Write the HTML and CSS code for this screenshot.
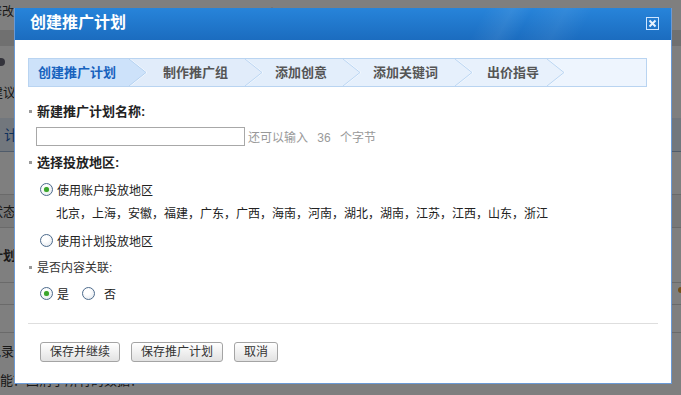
FILE: index.html
```html
<!DOCTYPE html>
<html lang="zh-CN">
<head>
    <meta charset="UTF-8">
    <meta name="viewport" content="width=device-width, initial-scale=1.0">
    <title>创建推广计划</title>
    <link rel="stylesheet" href="styles.css">
</head>
<body>

    <!-- page behind the dialog -->
    <div class="page">
        <div class="row row-top"><span class="cut">修改</span><span class="nav">账户设置 ⓘ　　推广管理　　　数据报告　　　优化中心　　　　工具</span></div>
        <div class="row row-band"></div>
        <div class="row row-info"><span class="dot"></span><span class="cut">建议。</span></div>
        <div class="row row-tab"><span class="tab">计划</span></div>
        <div class="row row-empty"></div>
        <div class="row row-head"><span class="cut">状态</span></div>
        <div class="row row-plan"><b class="cut">计划</b></div>
        <div class="row row-a"><span class="orange"></span></div>
        <div class="row row-b"></div>
        <div class="row row-log"><span class="cut2">记录</span></div>
        <div class="row row-last"><span>能？回消了所有的数据？</span></div>
    </div>

    <div class="overlay"></div>

    <div class="dialog">
        <div class="dialog-head">
            <span class="dialog-title">创建推广计划</span>
            <span class="close">
                <svg width="13" height="13" viewBox="0 0 13 13">
                    <rect x="0.5" y="0.5" width="12" height="12" fill="none" stroke="#cfe6ff"/>
                    <path d="M3.5 3.5 L9.5 9.5 M9.5 3.5 L3.5 9.5" stroke="#e8f3ff" stroke-width="2"/>
                </svg>
            </span>
        </div>

        <div class="dialog-body">
            <div class="steps">
                <div class="step step-on first">创建推广计划</div>
                <svg class="arrow" width="18" height="27" viewBox="0 0 18 27">
                    <rect width="18" height="27" fill="#e1ecfa"/>
                    <polygon points="0,0 17,13.5 0,27" fill="#cde2fa"/>
                    <polyline points="1,0 18,13.5 1,27" fill="none" stroke="#f4f9ff"/>
                    <polyline points="0,0 17,13.5 0,27" fill="none" stroke="#b6d2f0"/>
                </svg>
                <div class="step">制作推广组</div>
                <svg class="arrow" width="18" height="27" viewBox="0 0 18 27">
                    <rect width="18" height="27" fill="#e3eefb"/>
                    <polygon points="0,0 17,13.5 0,27" fill="#e1ecfa"/>
                    <polyline points="1,0 18,13.5 1,27" fill="none" stroke="#f4f9ff"/>
                    <polyline points="0,0 17,13.5 0,27" fill="none" stroke="#bcd6f2"/>
                </svg>
                <div class="step step-3">添加创意</div>
                <svg class="arrow" width="18" height="27" viewBox="0 0 18 27">
                    <rect width="18" height="27" fill="#e6f0fc"/>
                    <polygon points="0,0 17,13.5 0,27" fill="#e3eefb"/>
                    <polyline points="1,0 18,13.5 1,27" fill="none" stroke="#f4f9ff"/>
                    <polyline points="0,0 17,13.5 0,27" fill="none" stroke="#bcd6f2"/>
                </svg>
                <div class="step step-4">添加关键词</div>
                <svg class="arrow" width="18" height="27" viewBox="0 0 18 27">
                    <rect width="18" height="27" fill="#e8f1fc"/>
                    <polygon points="0,0 17,13.5 0,27" fill="#e6f0fc"/>
                    <polyline points="1,0 18,13.5 1,27" fill="none" stroke="#f4f9ff"/>
                    <polyline points="0,0 17,13.5 0,27" fill="none" stroke="#bcd6f2"/>
                </svg>
                <div class="step step-5">出价指导</div>
                <svg class="arrow" width="18" height="27" viewBox="0 0 18 27">
                    <rect width="18" height="27" fill="#eef5fe"/>
                    <polygon points="0,0 17,13.5 0,27" fill="#e8f1fc"/>
                    <polyline points="1,0 18,13.5 1,27" fill="none" stroke="#f4f9ff"/>
                    <polyline points="0,0 17,13.5 0,27" fill="none" stroke="#bcd6f2"/>
                </svg>
                <div class="step-rest"></div>
            </div>

            <div class="field-title bold t1">新建推广计划名称:</div>
            <div class="input-row">
                <input type="text" class="name-input">
                <span class="hint">还可以输入 <span class="num">36</span> 个字节</span>
            </div>

            <div class="field-title bold t2">选择投放地区:</div>
            <div class="radio-row r1"><span class="radio checked"></span>使用账户投放地区</div>
            <div class="regions">北京，上海，安徽，福建，广东，广西，海南，河南，湖北，湖南，江苏，江西，山东，浙江</div>
            <div class="radio-row r2"><span class="radio"></span>使用计划投放地区</div>

            <div class="field-title t3">是否内容关联:</div>
            <div class="radio-row r3">
                <span class="radio checked"></span>是
                <span class="radio no"></span>否
            </div>

            <div class="divider"></div>

            <div class="buttons">
                <button>保存并继续</button>
                <button>保存推广计划</button>
                <button>取消</button>
            </div>
        </div>
    </div>

</body>
</html>
```

FILE: styles.css
```css
body {
    margin: 0;
    font-family: "Liberation Sans", "Noto Sans CJK SC", sans-serif;
    font-size: 12px;
    color: #333;
    background-color: #fff;
    overflow: hidden;
}

/* page behind */
.page {
    height: 395px;
}
.row {
    display: flow-root;
    border-bottom: 1px solid #d4d4d4;
    box-sizing: border-box;
    position: relative;
    white-space: nowrap;
}
.row-top {
    height: 30px;
    line-height: 12px;
    padding-top: 6px;
    border-bottom: none;
}
.row-top .nav {
    margin-left: 60px;
    position: relative;
    top: 3px;
}
.cut {
    margin-left: -10px;
}
.cut2 {
    margin-left: -12px;
}
.row-band {
    height: 16px;
    background-color: #e0e0e0;
    border-bottom: none;
}
.row-info {
    height: 72px;
    border-bottom: none;
}
.row-info .dot {
    display: block;
    width: 8px;
    height: 8px;
    margin: 12px 0 0 -3px;
    border-radius: 50%;
    background-color: #667;
}
.row-info .cut {
    display: block;
    margin-top: 16px;
    font-size: 13px;
}
.row-tab {
    height: 34px;
    background-color: #e5eefa;
    border-bottom: 1px solid #9fb6d4;
    line-height: 34px;
}
.row-tab .tab {
    margin-left: 4px;
    color: #1a62b8;
    font-size: 14px;
}
.row-empty {
    height: 43px;
}
.row-head {
    height: 33px;
    line-height: 33px;
    background-color: #f0f0f0;
    font-size: 13px;
}
.row-plan {
    height: 55px;
    line-height: 55px;
    font-size: 13px;
}
.row-a {
    height: 22px;
}
.row-a .orange {
    position: absolute;
    right: -3px;
    top: 4px;
    width: 6px;
    height: 6px;
    border-radius: 50%;
    background-color: #e8a030;
}
.row-b {
    height: 28px;
}
.row-log {
    height: 37px;
    line-height: 37px;
    font-size: 13px;
    border-bottom: none;
}
.row-last {
    height: 25px;
    line-height: 22px;
    font-size: 13px;
    border-bottom: none;
}

.overlay {
    position: fixed;
    top: 0;
    left: 0;
    width: 100%;
    height: 100%;
    background-color: rgba(0, 0, 0, 0.5);
}

/* dialog */
.dialog {
    position: fixed;
    left: 14px;
    top: 8px;
    width: 656px;
    height: 375px;
    border: 1px solid #6a9ad6;
    border-top: none;
    background-color: #fff;
}
.dialog-head {
    height: 32px;
    display: flex;
    justify-content: space-between;
    align-items: flex-start;
    padding: 0 12px 0 15px;
    background: linear-gradient(118deg, transparent 70%, rgba(255, 255, 255, 0.07) 74%, transparent 77%, rgba(255, 255, 255, 0.06) 82%, transparent 86%),
                linear-gradient(#2784da, #1b6cbf);
}
.dialog-title {
    color: #fff;
    font-size: 16px;
    font-weight: bold;
    line-height: 29px;
}
.close {
    margin-top: 9px;
    height: 13px;
    line-height: 0;
}

.dialog-body {
    padding: 18px 13px 0 13px;
}

/* steps bar */
.steps {
    display: flex;
    height: 27px;
    margin-right: 11px;
    border: 1px solid #b9d4f1;
    background-color: #eef5fe;
}
.step {
    line-height: 27px;
    font-size: 13px;
    font-weight: bold;
    color: #555;
    padding: 0 17px 0 16px;
    background-color: #e1ecfa;
}
.step-on {
    color: #1762be;
    background-color: #cde2fa;
}
.first {
    padding: 0 13px 0 9px;
}
.step-3 {
    padding: 0 16px 0 12px;
    background-color: #e3eefb;
}
.step-4 {
    padding: 0 17px 0 12px;
    background-color: #e6f0fc;
}
.step-5 {
    padding: 0 8px 0 14px;
    background-color: #e8f1fc;
}
.arrow {
    display: block;
    flex: none;
}
.step-rest {
    flex: 1;
}

/* form */
.field-title {
    line-height: 20px;
    color: #333;
}
.field-title::before {
    content: "";
    display: inline-block;
    width: 3px;
    height: 3px;
    margin: 0 5px 3px 1px;
    vertical-align: middle;
    background-color: #999;
}
.bold {
    font-weight: bold;
    font-size: 13px;
    color: #222;
}
.t1 {
    margin-top: 15px;
}
.t2 {
    margin-top: 6px;
}
.t3 {
    margin-top: 8px;
}
.input-row {
    display: flex;
    align-items: center;
    height: 21px;
    margin: 4px 0 0 8px;
}
.name-input {
    box-sizing: border-box;
    width: 209px;
    height: 19px;
    margin: 0;
    padding: 0 3px;
    border: 1px solid #a8a8a8;
}
.hint {
    margin-left: 3px;
    color: #999;
}
.num {
    margin: 0 6px;
}
.radio-row {
    display: flex;
    align-items: center;
    height: 20px;
    margin-left: 12px;
    color: #222;
}
.r1 {
    margin-top: 6px;
}
.r2 {
    margin-top: 6px;
}
.r3 {
    margin-top: 5px;
}
.radio {
    box-sizing: border-box;
    width: 13px;
    height: 13px;
    margin-right: 4px;
    border: 1px solid #4d6b8c;
    border-radius: 50%;
    background: radial-gradient(circle at 40% 35%, #fff 30%, #dde3ea 100%);
    display: flex;
    align-items: center;
    justify-content: center;
}
.radio.checked::after {
    content: "";
    width: 5px;
    height: 5px;
    border-radius: 50%;
    background-color: #3aa52c;
    box-shadow: 0 0 1px #7fd06f;
}
.radio.no {
    margin-left: 13px;
    margin-right: 9px;
}
.regions {
    line-height: 20px;
    margin: 5px 0 0 28px;
    color: #222;
}
.divider {
    margin-top: 20px;
    border-top: 1px solid #dedede;
}
.buttons {
    display: flex;
    gap: 11px;
    margin: 18px 0 0 12px;
}
button {
    height: 20px;
    padding: 0 9px;
    font-family: "Liberation Sans", "Noto Sans CJK SC", sans-serif;
    font-size: 12px;
    color: #333;
    border: 1px solid #a4a4a4;
    border-radius: 3px;
    background: linear-gradient(#ffffff, #e2e2e2);
    line-height: 18px;
}
```
